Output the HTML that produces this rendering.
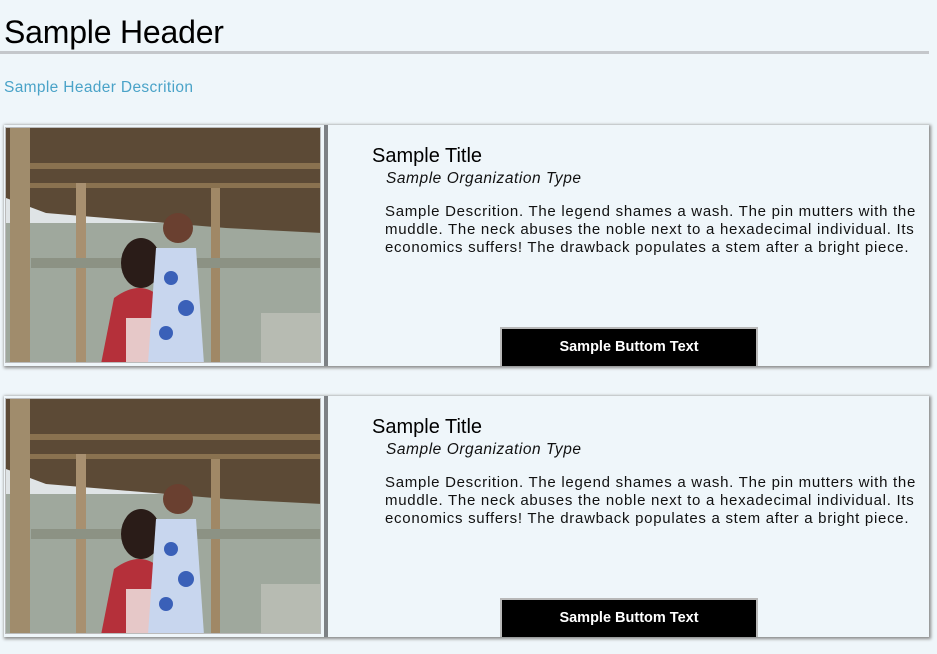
<!DOCTYPE html>
<html><head><meta charset="utf-8"><style>
body{margin:0;background:#eff6fa;font-family:"Liberation Sans",sans-serif;width:937px;height:654px;overflow:hidden;position:relative}
h1{position:absolute;left:4px;top:14px;margin:0;font-size:32px;font-weight:normal;color:#000;letter-spacing:-0.2px}
.hr{position:absolute;left:0;top:51px;width:929px;height:3px;background:#c4c7cb}
.desc{position:absolute;left:4px;top:79px;font-size:15.5px;color:#4aa3c8;letter-spacing:0.35px}
.card{position:absolute;left:4px;width:925px;height:241px;background:#eff6fa;box-shadow:1px 1px 3px 1px #8a8a8a}
.img{position:absolute;left:1px;top:2px;width:316px;height:236px;border:1px solid #bbb;box-sizing:border-box;overflow:hidden}
.div{position:absolute;left:320px;top:0;width:4px;height:241px;background:#7d8185}
.t{position:absolute;left:368px;top:20px;font-size:20px;color:#000}
.o{position:absolute;left:382px;top:45px;font-size:15.5px;font-style:italic;color:#111;letter-spacing:0.55px}
.d{position:absolute;left:381px;top:78px;width:540px;font-size:15px;line-height:18px;color:#111;letter-spacing:0.72px}
.b{position:absolute;left:496px;top:202px;width:258px;height:39px;box-sizing:border-box;background:#000;border:2px solid #b8b8b8;border-bottom:none;color:#fff;font-weight:bold;font-size:14.5px;text-align:center;line-height:36px}
</style></head><body>
<h1>Sample Header</h1><div class="hr"></div>
<div class="desc">Sample Header Descrition</div>

<div class="card" style="top:125px">
<div class="img"><svg width="316" height="236" viewBox="0 0 316 236">
<rect width="316" height="236" fill="#a8b0a8"/>
<rect y="90" width="316" height="146" fill="#9fa89d"/>
<rect y="70" width="316" height="25" fill="#dfe4e6"/>
<polygon points="0,0 316,0 316,105 220,100 100,90 40,85 0,70" fill="#5c4a36"/>
<rect x="20" y="35" width="296" height="6" fill="#8a7250"/>
<rect x="20" y="55" width="296" height="5" fill="#8a7250"/>
<rect x="4" y="0" width="20" height="236" fill="#a08c6c"/>
<rect x="70" y="55" width="10" height="181" fill="#a89070"/>
<rect x="205" y="60" width="9" height="176" fill="#a08866"/>
<rect x="25" y="130" width="291" height="10" fill="#8c9284"/>
<ellipse cx="135" cy="135" rx="20" ry="25" fill="#2a1c18"/>
<path d="M108,170 Q135,150 155,170 L150,236 L95,236 Z" fill="#b5303a"/>
<rect x="120" y="190" width="30" height="46" fill="#e6c8c8"/>
<circle cx="172" cy="100" r="15" fill="#6a4030"/>
<path d="M150,120 L190,120 L198,236 L142,236 Z" fill="#c8d6ee"/>
<circle cx="165" cy="150" r="7" fill="#3a60b8"/><circle cx="180" cy="180" r="8" fill="#3a60b8"/><circle cx="160" cy="205" r="7" fill="#3a60b8"/>
<rect x="255" y="185" width="60" height="51" fill="#c8c8c0" opacity=".6"/>
</svg></div>
<div class="div"></div>
<div class="t">Sample Title</div>
<div class="o">Sample Organization Type</div>
<div class="d">Sample Descrition. The legend shames a wash. The pin mutters with the muddle. The neck abuses the noble next to a hexadecimal individual. Its economics suffers! The drawback populates a stem after a bright piece.</div>
<div class="b">Sample Buttom Text</div>
</div>

<div class="card" style="top:396px">
<div class="img"><svg width="316" height="236" viewBox="0 0 316 236">
<rect width="316" height="236" fill="#a8b0a8"/>
<rect y="90" width="316" height="146" fill="#9fa89d"/>
<rect y="70" width="316" height="25" fill="#dfe4e6"/>
<polygon points="0,0 316,0 316,105 220,100 100,90 40,85 0,70" fill="#5c4a36"/>
<rect x="20" y="35" width="296" height="6" fill="#8a7250"/>
<rect x="20" y="55" width="296" height="5" fill="#8a7250"/>
<rect x="4" y="0" width="20" height="236" fill="#a08c6c"/>
<rect x="70" y="55" width="10" height="181" fill="#a89070"/>
<rect x="205" y="60" width="9" height="176" fill="#a08866"/>
<rect x="25" y="130" width="291" height="10" fill="#8c9284"/>
<ellipse cx="135" cy="135" rx="20" ry="25" fill="#2a1c18"/>
<path d="M108,170 Q135,150 155,170 L150,236 L95,236 Z" fill="#b5303a"/>
<rect x="120" y="190" width="30" height="46" fill="#e6c8c8"/>
<circle cx="172" cy="100" r="15" fill="#6a4030"/>
<path d="M150,120 L190,120 L198,236 L142,236 Z" fill="#c8d6ee"/>
<circle cx="165" cy="150" r="7" fill="#3a60b8"/><circle cx="180" cy="180" r="8" fill="#3a60b8"/><circle cx="160" cy="205" r="7" fill="#3a60b8"/>
<rect x="255" y="185" width="60" height="51" fill="#c8c8c0" opacity=".6"/>
</svg></div>
<div class="div"></div>
<div class="t">Sample Title</div>
<div class="o">Sample Organization Type</div>
<div class="d">Sample Descrition. The legend shames a wash. The pin mutters with the muddle. The neck abuses the noble next to a hexadecimal individual. Its economics suffers! The drawback populates a stem after a bright piece.</div>
<div class="b">Sample Buttom Text</div>
</div>
</body></html>
